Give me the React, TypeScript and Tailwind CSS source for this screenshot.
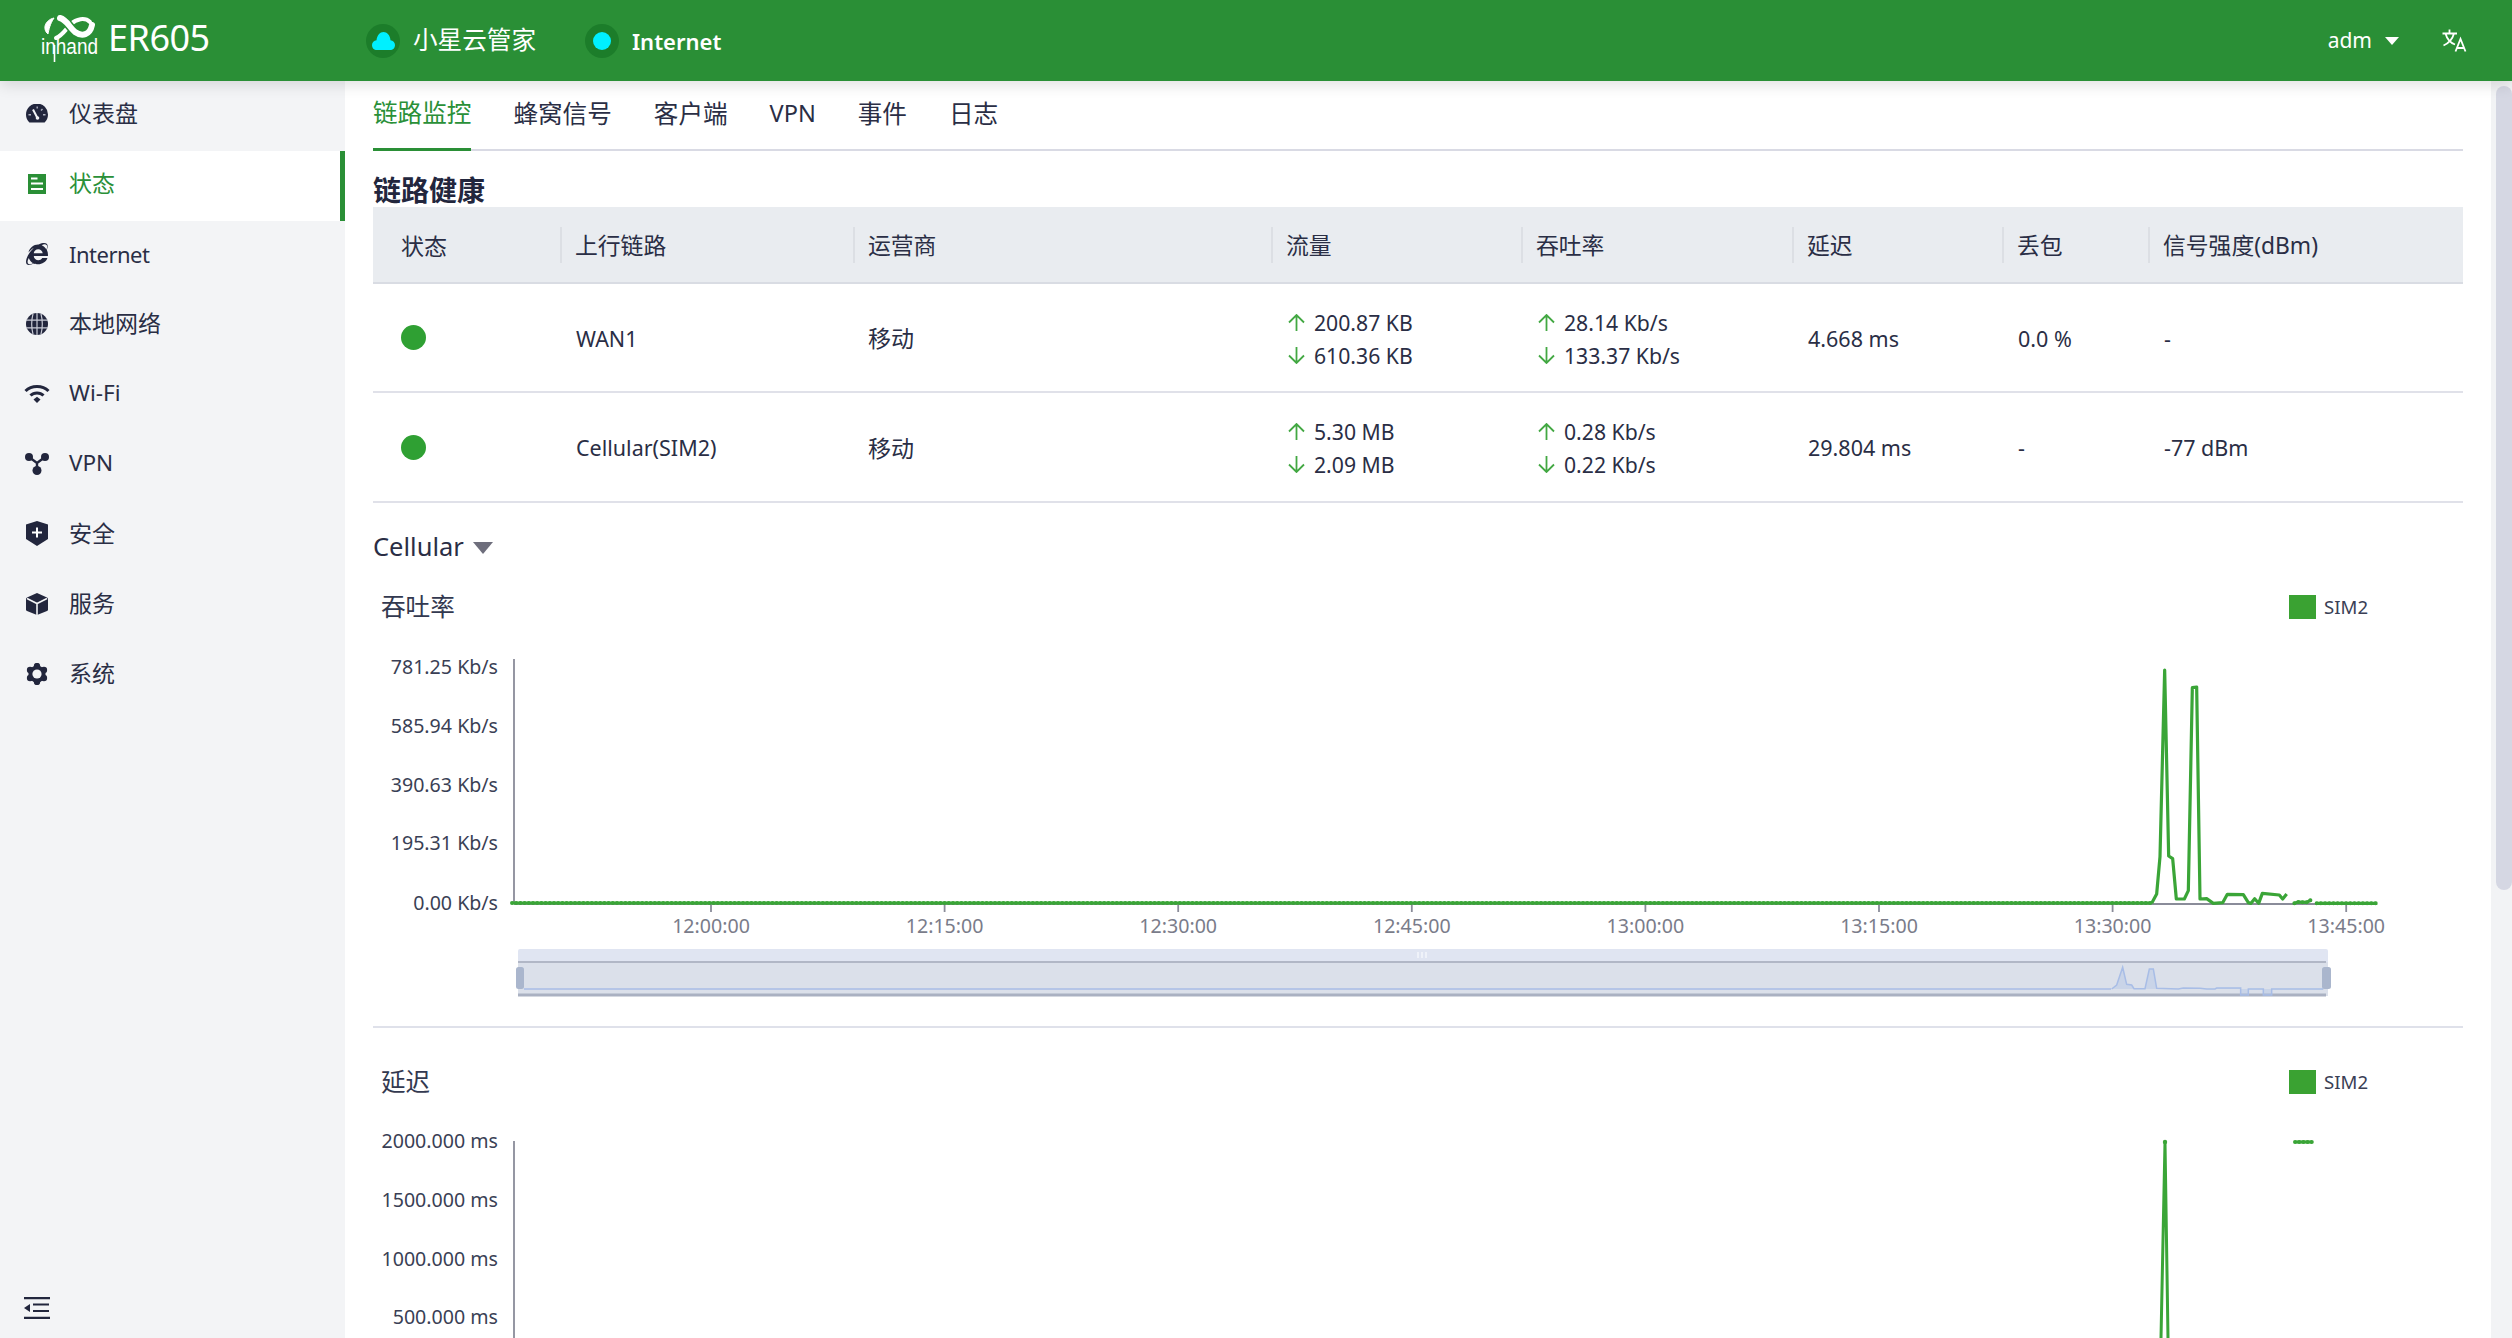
import React from "react";
import { FaInternetExplorer } from "react-icons/fa";

const DARK = "#22263d";
const GREEN = "#2a8f36";
const LINE = "#3aa537";

const zp = (pts: number[][]) =>
  pts.map(([x, y]) => `${2050 + x / 3},${640 + y / 3}`).join(" ");

function Gauge() {
  return (
    <svg width="22" height="19" viewBox="0 0 22 19">
      <path d="M3.4 18.5A11 11 0 1 1 18.6 18.5Z" fill={DARK} />
      <path d="M7 5.5L11.2 13.5" stroke="#f3f4f6" strokeWidth="2" />
      <circle cx="11.5" cy="14" r="1.8" fill="#f3f4f6" />
      <path d="M10.5 2.5h1.4v2h-1.4zM2.5 10h2.5v1.4H2.5zM17 10h2.5v1.4H17zM16 4.5l1 1-1.5 1.5-1-1z" fill="#aeb1c0" />
    </svg>
  );
}
function Doc() {
  return (
    <svg width="18" height="20" viewBox="0 0 18 20">
      <rect width="18" height="20" fill={GREEN} />
      <path d="M3 4.5h6.5M3 9.5h12M3 15h12" stroke="#fff" strokeWidth="1.8" />
    </svg>
  );
}
function Globe() {
  return (
    <svg width="22" height="22" viewBox="0 0 22 22">
      <circle cx="11" cy="11" r="11" fill={DARK} />
      <path d="M0 7.2h22M0 14.8h22M11 0v22M7 .8C5.4 7 5.4 15 7 21.2M15 .8c1.6 6.2 1.6 14.200 0 20.400" stroke="#c9cbd6" strokeWidth="1.200" fill="none" />
    </svg>
  );
}
function Wifi() {
  return (
    <svg width="26" height="19" viewBox="0 0 26 19">
      <path d="M1.500 7C7.500 1 18.500 1 24.500 7" stroke={DARK} strokeWidth="3" fill="none" />
      <path d="M6.500 11.500C10 8 16 8 19.500 11.500" stroke={DARK} strokeWidth="3" fill="none" />
      <path d="M9.500 15.500L13 12.800 16.500 15.500 13 19Z" fill={DARK} />
    </svg>
  );
}
function Nodes() {
  return (
    <svg width="24" height="22" viewBox="0 0 24 22">
      <circle cx="4" cy="4" r="4" fill={DARK} />
      <circle cx="20" cy="4" r="4" fill={DARK} />
      <circle cx="12" cy="17.500" r="4.500" fill={DARK} />
      <path d="M4 4L12 10 20 4M12 10V17" stroke={DARK} strokeWidth="2.400" fill="none" />
    </svg>
  );
}
function Shield() {
  return (
    <svg width="22" height="25" viewBox="0 0 22 25">
      <path d="M11 0L22 3.500V18L11 25 0 18V3.500Z" fill={DARK} />
      <path d="M6 11.500h10M11 6.500v10" stroke="#fff" strokeWidth="2" />
    </svg>
  );
}
function Cube() {
  return (
    <svg width="22" height="22" viewBox="0 0 22 22">
      <path d="M11 0L21 4.500Q22 5 22 6V16.500Q22 17.500 21 18L11 22 1 18Q0 17.500 0 16.500V6Q0 5 1 4.500Z" fill={DARK} />
      <path d="M1 5.500L11 10.500 21 5.500M11 10.500V22" stroke="#f3f4f6" strokeWidth="1.600" fill="none" />
    </svg>
  );
}
function Gear() {
  const lobes = [0, 60, 120, 180, 240, 300].map((a) => {
    const r = ((a + 30) * Math.PI) / 180;
    return <circle key={a} cx={11 + 8 * Math.cos(r)} cy={11 + 8 * Math.sin(r)} r="3.200" fill={DARK} />;
  });
  return (
    <svg width="22" height="22" viewBox="0 0 22 22">
      {lobes}
      <circle cx="11" cy="11" r="8.600" fill={DARK} />
      <circle cx="11" cy="11" r="4.600" fill="#f3f4f6" />
    </svg>
  );
}
function Collapse() {
  return (
    <svg width="26" height="22" viewBox="0 0 26 22">
      <path d="M0 1.200h26M0 20.800h26M9 7.500h16M9 14h16" stroke={DARK} strokeWidth="2.200" />
      <path d="M0 11L6 7V15Z" fill={DARK} />
    </svg>
  );
}
function Translate() {
  return (
    <svg width="25" height="23" viewBox="0 0 25 23" fill="none" stroke="#fff" strokeWidth="1.800">
      <path d="M0.500 4.500H15M7.500 0.500V4.500M12 4.500C10.500 10 6 14.500 1.500 16.500M3.500 4.500C5 10 9 14 13 15.500" />
      <path d="M13.500 22.500L18.500 10 23.500 22.500M15 19H22" />
    </svg>
  );
}
function Up() {
  return (
    <svg width="17" height="17" viewBox="0 0 17 17" fill="none" stroke="#43a843" strokeWidth="1.800">
      <path d="M8.500 1V17M1 8.500L8.500 1 16 8.500" />
    </svg>
  );
}
function Down() {
  return (
    <svg width="17" height="17" viewBox="0 0 17 17" fill="none" stroke="#43a843" strokeWidth="1.800">
      <path d="M8.500 0V16M1 8.500L8.500 16 16 8.500" />
    </svg>
  );
}

function Logo() {
  return (
    <svg width="60" height="50" viewBox="0 0 60 50" className="shrink-0 overflow-visible">
      <g fill="none" stroke="#fff">
        <path d="M14 2C5 4 2 13 8 18 9 13 10 8 14 2Z" fill="#fff" strokeWidth="1" strokeLinejoin="round" />
        <path d="M16 22C22 20 26 13 31 8 36 3 45 1 50 6" strokeWidth="4" strokeLinecap="round" />
        <path d="M20 2C27 4 29 11 35 16 42 21 50 19 52 9" strokeWidth="9" stroke="#2a8f36" />
        <path d="M20 2C27 4 29 11 35 16 42 21 50 19 52 9" strokeWidth="6" strokeLinecap="round" />
      </g>
      <text x="1" y="37.500" fontSize="22" fill="#fff" textLength="57" lengthAdjust="spacingAndGlyphs" fontFamily="Liberation Sans">inhand</text>
      <path d="M14.500 29V46" stroke="#fff" strokeWidth="1.600" />
    </svg>
  );
}

function Header() {
  return (
    <header className="relative z-10 flex h-[81px] shrink-0 items-center bg-[#2a8f36] pl-[40px] pr-[45px] text-white shadow-[0_4px_14px_rgba(0,0,0,0.12)]">
      <div className="flex w-[326px] items-center">
        <Logo />
        <span className="ml-[8px] -mt-[6px] text-[36px] leading-none tracking-[-0.5px]">ER605</span>
      </div>
      <span className="flex h-[34px] w-[34px] items-center justify-center rounded-full bg-[#1c7d2a]">
        <svg width="23" height="18" viewBox="0 0 23 18">
          <path d="M5 18C2 18 0 16 0 13 0 10.500 2 8.500 4.500 8.200 5 3.500 8 0 11.500 0 15 0 18 3 18.500 8.200 21 8.500 23 10.500 23 13 23 16 21 18 18 18Z" fill="#00f0ff" />
        </svg>
      </span>
      <span className="ml-[13px] text-[24.6px] leading-none">小星云管家</span>
      <span className="ml-[49px] flex h-[34px] w-[34px] items-center justify-center rounded-full bg-[#1c7d2a]">
        <span className="h-[18px] w-[18px] rounded-full bg-[#00f0ff]" />
      </span>
      <span className="ml-[13px] text-[22px] font-semibold leading-none">Internet</span>
      <span className="ml-auto text-[21px] leading-none">adm</span>
      <span className="ml-[13px] h-0 w-0 border-x-[7px] border-t-[8px] border-x-transparent border-t-white" />
      <span className="ml-[43px] flex">
        <Translate />
      </span>
    </header>
  );
}

const navItems: [React.ReactNode, string, boolean, string][] = [
  [<Gauge />, "仪表盘", false, "text-[23px]"],
  [<Doc />, "状态", true, "text-[23px]"],
  [<FaInternetExplorer size={22} color={DARK} />, "Internet", false, "text-[22px] tracking-[-0.5px]"],
  [<Globe />, "本地网络", false, "text-[23px]"],
  [<Wifi />, "Wi-Fi", false, "text-[22.500px]"],
  [<Nodes />, "VPN", false, "text-[22.500px]"],
  [<Shield />, "安全", false, "text-[23px]"],
  [<Cube />, "服务", false, "text-[23px]"],
  [<Gear />, "系统", false, "text-[23px]"],
];

function Sidebar() {
  return (
    <aside className="flex w-[345px] shrink-0 flex-col bg-[#f3f4f6]">
      {navItems.map(([icon, label, active, size]) => (
        <div
          key={label}
          className={
            active
              ? "flex h-[70px] items-center border-r-[5px] border-[#2a8f36] bg-white pb-[5px] text-[#2a9038]"
              : "flex h-[70px] items-center pb-[5px] text-[#2a2e45]"
          }
        >
          <span className="flex w-[74px] justify-center">{icon}</span>
          <span className={`-ml-[5px] leading-none ${size}`}>{label}</span>
        </div>
      ))}
      <div className="mt-auto pb-[19px] pl-[24px]">
        <Collapse />
      </div>
    </aside>
  );
}

function Tabs() {
  const items = ["链路监控", "蜂窝信号", "客户端", "VPN", "事件", "日志"];
  return (
    <div className="flex h-[70px] shrink-0 gap-[42px] border-b-2 border-[#d9dae4]">
      {items.map((t, i) => (
        <div
          key={t}
          className={
            i === 0
              ? "-mb-[2px] flex h-[70px] items-center border-b-[3px] border-[#2a8f36] pb-[2px] text-[24.6px] text-[#2a9038]"
              : t === "VPN"
                ? "flex h-[70px] items-center pb-[4px] text-[23.500px] text-[#2a2e45]"
                : "flex h-[70px] items-center pb-[4px] text-[24.6px] text-[#2a2e45]"
          }
        >
          {t}
        </div>
      ))}
    </div>
  );
}

const COLS = "grid grid-cols-[187px_293px_418px_250px_271px_210px_146px_315px]";
const heads = ["状态", "上行链路", "运营商", "流量", "吞吐率", "延迟", "丢包", "信号强度(dBm)"];

function Pair({ a, b }: { a: string; b: string }) {
  return (
    <div className="pl-[17px] pt-[2px] text-[21.200px] leading-[33px]">
      <div className="flex items-center gap-[9px]">
        <Up />
        <span>{a}</span>
      </div>
      <div className="flex items-center gap-[9px]">
        <Down />
        <span>{b}</span>
      </div>
    </div>
  );
}

function Cell({ children, cjk }: { children: React.ReactNode; cjk?: boolean }) {
  return <div className={cjk ? "pl-[15px] pt-[2px] text-[23px]" : "pl-[16px] pt-[3px] text-[21.500px]"}>{children}</div>;
}

function Row({ r, h }: { r: string[]; h: string }) {
  return (
    <div className={`${COLS} ${h} items-center border-b-2 border-[#e0e1e9] text-[#2a2e45]`}>
      <div className="pl-[28px]">
        <div className="h-[25px] w-[25px] rounded-full bg-[#2fa033]" />
      </div>
      <Cell>{r[0]}</Cell>
      <Cell cjk>{r[1]}</Cell>
      <Pair a={r[2]} b={r[3]} />
      <Pair a={r[4]} b={r[5]} />
      <Cell>{r[6]}</Cell>
      <Cell>{r[7]}</Cell>
      <Cell>{r[8]}</Cell>
    </div>
  );
}

function Table() {
  return (
    <div>
      <div className={`${COLS} h-[77px] items-center border-b-2 border-[#d9dce3] bg-[#e9ecf0] text-[#2a2e45]`}>
        {heads.map((h, i) => (
          <div
            key={h}
            className={
              i === 0
                ? "flex h-[36px] items-center pl-[28px] pt-[4px] text-[23px]"
                : "flex h-[36px] items-center border-l-2 border-[#dcdfe4] pl-[13px] pt-[4px] text-[22.800px]"
            }
          >
            {h}
          </div>
        ))}
      </div>
      <Row h="h-[109px]" r={["WAN1", "移动", "200.87 KB", "610.36 KB", "28.14 Kb/s", "133.37 Kb/s", "4.668 ms", "0.0 %", "-"]} />
      <Row h="h-[110px]" r={["Cellular(SIM2)", "移动", "5.30 MB", "2.09 MB", "0.28 Kb/s", "0.22 Kb/s", "29.804 ms", "-", "-77 dBm"]} />
    </div>
  );
}

function Legend({ y }: { y: number }) {
  return (
    <g>
      <rect x="2289" y={y - 12} width="27" height="24" fill="#3aa232" />
      <text x="2324" y={y + 6.500} fontSize="18.600" fill="#3a4055">SIM2</text>
    </g>
  );
}

function YLabels({ items }: { items: [string, number][] }) {
  return (
    <g fontSize="19.600" fill="#3a3f55" textAnchor="end">
      {items.map(([t, y]) => (
        <text key={t} x="498" y={y + 7}>{t}</text>
      ))}
    </g>
  );
}

const seg1 = zp([
  [305, 790], [320, 762], [330, 650], [344, 90], [356, 648], [368, 656], [379, 777], [403, 777], [415, 752],
  [427, 143], [440, 141], [450, 777], [470, 776], [490, 790], [518, 788], [532, 763], [580, 764], [595, 788],
  [603, 790], [614, 776], [626, 790], [637, 760], [688, 765], [698, 777], [710, 762],
]);
const seg2 = zp([[733, 790], [745, 786], [770, 787], [783, 780]]);
const seg3 = zp([[800, 790], [982, 790]]);
const mini = zp([
  [185, 1047], [200, 1035], [218, 982], [230, 1033], [245, 1035], [252, 1046], [285, 1046], [298, 987], [310, 987],
  [320, 1045], [385, 1047], [400, 1044], [450, 1045], [470, 1047], [495, 1047], [500, 1044], [572, 1044], [572, 1065],
  [595, 1065], [595, 1047], [640, 1047], [640, 1065], [665, 1065], [665, 1047], [820, 1047],
]);

function Series({ points, dots }: { points: string; dots?: boolean }) {
  return (
    <g fill="none" stroke={LINE} strokeLinejoin="round">
      <polyline points={points} strokeWidth="3.200" />
      {dots && <polyline points={points} strokeWidth="4" strokeDasharray="0 4.200" strokeLinecap="round" />}
    </g>
  );
}

const xTicks = ["12:00:00", "12:15:00", "12:30:00", "12:45:00", "13:00:00", "13:15:00", "13:30:00", "13:45:00"];

function ThroughputChart() {
  return (
    <svg viewBox="373 565 2090 461" width="2090" height="461" className="block">
      <text x="381" y="616" fontSize="24.600" fill="#333950">吞吐率</text>
      <Legend y={607} />
      <YLabels items={[["781.25 Kb/s", 667], ["585.94 Kb/s", 726], ["390.63 Kb/s", 785], ["195.31 Kb/s", 843], ["0.00 Kb/s", 903]]} />
      <path d="M514 659V904M514 904H2377" stroke="#8a8c99" strokeWidth="1.800" fill="none" />
      <g>
        {xTicks.map((t, i) => {
          const x = 711 + i * 233.6;
          return (
            <g key={t}>
              <path d={`M${x} 904V912`} stroke="#8a8c99" strokeWidth="1.800" />
              <text x={x} y="933" fontSize="19.600" fill="#7a7c8a" textAnchor="middle">{t}</text>
            </g>
          );
        })}
      </g>
      <Series points={`512,903 ${2050 + 305 / 3},903`} dots />
      <Series points={seg1} />
      <Series points={seg2} dots />
      <Series points={seg3} dots />
      <rect x="518" y="949" width="1810" height="47" rx="2" fill="#e0e5f2" />
      <rect x="518" y="962" width="1810" height="34" fill="#dbe0ea" />
      <path d="M518 962H2326" stroke="#b1b7c6" strokeWidth="2" />
      <path d="M518 995H2326" stroke="#aab1c2" strokeWidth="3" />
      <path d="M524 989H2111" stroke="#a8bde6" strokeWidth="1.500" />
      <polyline points={mini} fill="#a8bde6" fillOpacity="0.35" stroke="#a8bde6" strokeWidth="1.500" />
      <path d="M1418 952v6M1422 952v6M1426 952v6" stroke="#f4f6fb" strokeWidth="1.500" />
      <rect x="516" y="967" width="8" height="22" rx="2.500" fill="#aab6cd" />
      <rect x="2322" y="967" width="9" height="22" rx="2.500" fill="#aab6cd" />
    </svg>
  );
}

function LatencyChart() {
  return (
    <svg viewBox="373 1028 2090 310" width="2090" height="310" className="block">
      <text x="381" y="1090.500" fontSize="24.600" fill="#333950">延迟</text>
      <Legend y={1082} />
      <YLabels items={[["2000.000 ms", 1141], ["1500.000 ms", 1200], ["1000.000 ms", 1259], ["500.000 ms", 1317]]} />
      <path d="M514 1141V1338" stroke="#8a8c99" strokeWidth="1.800" />
      <polyline points="2161,1338 2165,1142 2168,1338" fill="none" stroke={LINE} strokeWidth="3" strokeLinejoin="round" />
      <circle cx="2165" cy="1142" r="2.200" fill={LINE} />
      <Series points="2295,1142 2312,1142" dots />
    </svg>
  );
}

function Scrollbar() {
  return (
    <div className="w-[21px] shrink-0 bg-[#f2f3f5] pl-[5px] pt-[5px]">
      <div className="h-[804px] w-[16px] rounded-full bg-[#d5d7e3]" />
    </div>
  );
}

export default function App() {
  return (
    <div className="flex h-[1338px] w-[2512px] flex-col overflow-hidden bg-white font-['Noto_Sans','Noto_Sans_CJK_SC',sans-serif]">
      <Header />
      <div className="flex min-h-0 flex-1">
        <Sidebar />
        <main className="min-w-0 flex-1 overflow-hidden px-[28px]">
          <Tabs />
          <h2 className="pt-[22px] text-[28px] font-bold leading-[34px] text-[#22263d]">链路健康</h2>
          <Table />
          <div className="mt-[26px] flex h-[36px] items-center gap-[9px] text-[25.500px] leading-none text-[#2a2e45]">
            <span>Cellular</span>
            <span className="mt-[2px] h-0 w-0 border-x-[10px] border-t-[12px] border-x-transparent border-t-[#6e6e7c]" />
          </div>
          <ThroughputChart />
          <div className="h-[2px] bg-[#dfe1ea]" />
          <LatencyChart />
        </main>
        <Scrollbar />
      </div>
    </div>
  );
}
